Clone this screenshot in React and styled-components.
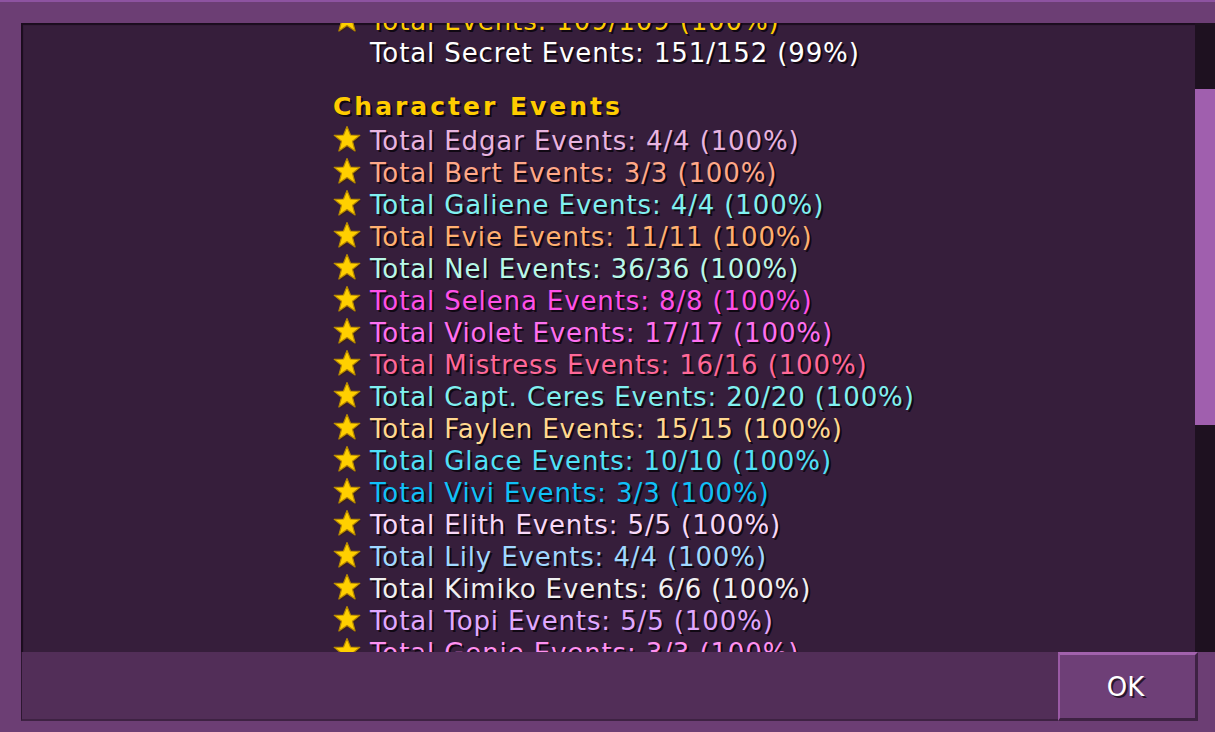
import React from "react";
import styled, { createGlobalStyle } from "styled-components";

const GlobalStyle = createGlobalStyle`
  html, body {
    margin: 0;
    padding: 0;
    overflow: hidden;
  }
  body {
    font-family: "DejaVu Sans", "Liberation Sans", sans-serif;
  }
`;

const Frame = styled.div`
  display: flex;
  flex-direction: column;
  width: 100vw;
  height: 100vh;
  box-sizing: border-box;
  padding: 21px 0 11px 21px;
  background-color: #6c3e74;
  border-top: 2px solid #8d53a0;
`;

const Main = styled.div`
  flex: 1;
  display: flex;
  min-height: 0;
`;

const Viewport = styled.div`
  flex: 1;
  overflow: hidden;
  background-color: #361e3b;
  box-shadow: inset 2px 2px 1px rgba(20, 8, 22, 0.8);
`;

const List = styled.div`
  display: flex;
  flex-direction: column;
  padding-left: 312px;
  margin-top: -18px;
`;

const Row = styled.div`
  display: flex;
  align-items: center;
  height: 32px;
  gap: 9px;
`;

const Label = styled.span`
  color: ${(p) => p.color};
  font-size: 26px;
  line-height: 32px;
  letter-spacing: 0.88px;
  white-space: nowrap;
  text-shadow: 2px 2px 0 rgba(10, 4, 12, 0.85);
`;

const Heading = styled.div`
  margin: 22px 0 2px;
  height: 32px;
  line-height: 32px;
  color: #ffcc00;
  font-size: 25px;
  font-weight: bold;
  letter-spacing: 3px;
  text-shadow: 2px 2px 0 rgba(10, 4, 12, 0.85);
`;

const StarBox = styled.span`
  display: flex;
  width: 28px;
  height: 29px;
  flex-shrink: 0;
  margin-top: -4px;
`;

const Scrollbar = styled.div`
  width: 20px;
  box-sizing: border-box;
  padding-top: 66px;
  background-color: #1e1120;
`;

const Thumb = styled.div`
  height: 336px;
  background-color: #a05fae;
`;

const Footer = styled.div`
  display: flex;
  height: 69px;
  margin-right: 17px;
`;

const Bar = styled.div`
  flex: 1;
  background-color: #522e58;
  border-left: 1px solid #2c1730;
  border-bottom: 2px solid #3e2243;
`;

const OkButton = styled.button`
  width: 140px;
  box-sizing: border-box;
  margin: 0;
  padding: 0 4px 0 0;
  background-color: #6e3f77;
  border-style: solid;
  border-width: 3px 3px 3px 2px;
  border-color: #a262ad #3e2243 #3e2243 #9a5aa5;
  color: #ffffff;
  font-family: "DejaVu Sans", "Liberation Sans", sans-serif;
  font-size: 26px;
  text-shadow: 2px 2px 0 rgba(10, 4, 12, 0.7);
`;

const STAR =
  "14,1.5 17.5,10 26.8,10.4 19.5,16.3 22.1,26 14,20.6 5.9,26 8.5,16.3 1.2,10.4 10.5,10";

function Star() {
  return (
    <StarBox>
      <svg width="28" height="29" viewBox="0 0 28 29">
        <polygon points={STAR} fill="#3a1e10" opacity="0.6" transform="translate(1.5,1.5)" />
        <polygon
          points={STAR}
          fill="#ffd000"
          stroke="#b88a00"
          strokeWidth="1.2"
          strokeLinejoin="round"
        />
      </svg>
    </StarBox>
  );
}

const totals = [
  { text: "Total Events: 109/109 (100%)", color: "#ffcc00", star: true },
  { text: "Total Secret Events: 151/152 (99%)", color: "#ffffff", star: false },
];

const characters = [
  ["Edgar", "4/4", "#e8b4e0"],
  ["Bert", "3/3", "#ffa888"],
  ["Galiene", "4/4", "#80f0f0"],
  ["Evie", "11/11", "#ffb070"],
  ["Nel", "36/36", "#b8f8e8"],
  ["Selena", "8/8", "#ff50e8"],
  ["Violet", "17/17", "#ff70f0"],
  ["Mistress", "16/16", "#ff6898"],
  ["Capt. Ceres", "20/20", "#80f0f0"],
  ["Faylen", "15/15", "#ffd890"],
  ["Glace", "10/10", "#50e0f8"],
  ["Vivi", "3/3", "#10c0f8"],
  ["Elith", "5/5", "#f8d8f8"],
  ["Lily", "4/4", "#a0d8ff"],
  ["Kimiko", "6/6", "#f0f0f0"],
  ["Topi", "5/5", "#e0a8ff"],
  ["Genie", "3/3", "#ff90f0"],
];

export default function App() {
  return (
    <>
      <GlobalStyle />
      <Frame>
        <Main>
          <Viewport>
            <List>
              {totals.map((t) => (
                <Row key={t.text}>
                  {t.star ? <Star /> : <StarBox />}
                  <Label color={t.color}>{t.text}</Label>
                </Row>
              ))}
              <Heading>Character Events</Heading>
              {characters.map(([name, count, color]) => (
                <Row key={name}>
                  <Star />
                  <Label color={color}>
                    Total {name} Events: {count} (100%)
                  </Label>
                </Row>
              ))}
            </List>
          </Viewport>
          <Scrollbar>
            <Thumb />
          </Scrollbar>
        </Main>
        <Footer>
          <Bar />
          <OkButton>OK</OkButton>
        </Footer>
      </Frame>
    </>
  );
}
